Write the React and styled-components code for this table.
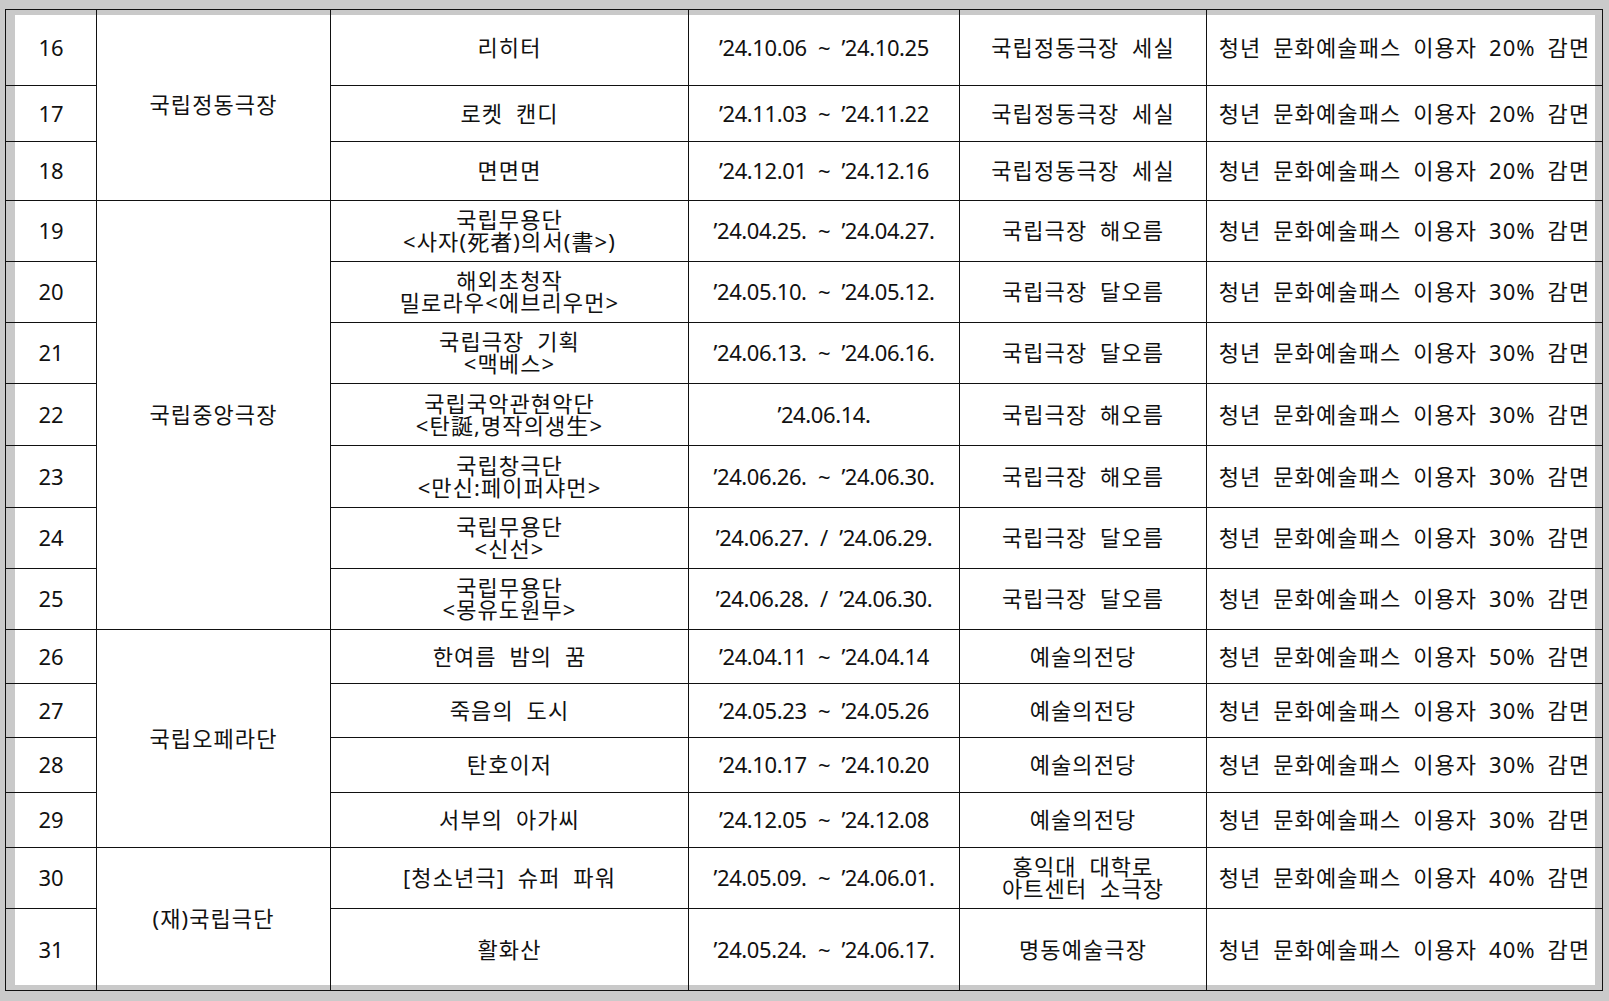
import React from 'react';
import styled, { createGlobalStyle } from 'styled-components';

const GlobalStyle = createGlobalStyle`
  html, body {
    margin: 0;
    padding: 0;
    background: #cacaca;
  }
  body {
    font-family: "Noto Sans", "Noto Sans CJK KR", sans-serif;
    color: #111;
  }
`;

const Page = styled.div`
  width: 1609px;
  height: 1001px;
  padding: 9px 0 0 5px;
  box-sizing: border-box;
  overflow: hidden;
`;

const Table = styled.table`
  table-layout: fixed;
  border-collapse: collapse;
  width: 1597px;
  background: #fff;
  border: 1.5px solid #111;
`;

const Col = styled.col`
  width: ${p => p.$w}px;
`;

const BAND = '#c9c9c9';

const Td = styled.td`
  border: 1px solid #111;
  padding: 0 0 2px;
  text-align: center;
  vertical-align: middle;
  font-size: 22px;
  line-height: 22px;
  letter-spacing: ${p => p.$ls ?? 0}px;
  word-spacing: ${p => p.$ws ?? 2}px;
  white-space: nowrap;
  box-shadow: ${p =>
    [
      p.$top && `inset 0 5px 0 ${BAND}`,
      p.$bottom && `inset 0 -5px 0 ${BAND}`,
      p.$left && `inset 9px 0 0 ${BAND}`,
      p.$right && `inset -7px 0 0 ${BAND}`,
    ]
      .filter(Boolean)
      .join(', ') || 'none'};
`;

const Row = styled.tr`
  height: ${p => p.$h}px;
`;

const Q = '\u2019';

const groups = [
  {
    name: '국립정동극장',
    rows: [
      [16, '리히터', `${Q}24.10.06 ~ ${Q}24.10.25`, '국립정동극장 세실', 20, 76],
      [17, '로켓 캔디', `${Q}24.11.03 ~ ${Q}24.11.22`, '국립정동극장 세실', 20, 56],
      [18, '면면면', `${Q}24.12.01 ~ ${Q}24.12.16`, '국립정동극장 세실', 20, 59],
    ],
  },
  {
    name: '국립중앙극장',
    rows: [
      [19, ['국립무용단', '<사자(死者)의서(書>)'], `${Q}24.04.25. ~ ${Q}24.04.27.`, '국립극장 해오름', 30, 61],
      [20, ['해외초청작', '밀로라우<에브리우먼>'], `${Q}24.05.10. ~ ${Q}24.05.12.`, '국립극장 달오름', 30, 61],
      [21, ['국립극장 기획', '<맥베스>'], `${Q}24.06.13. ~ ${Q}24.06.16.`, '국립극장 달오름', 30, 61],
      [22, ['국립국악관현악단', '<탄誕,명작의생生>'], `${Q}24.06.14.`, '국립극장 해오름', 30, 62],
      [23, ['국립창극단', '<만신:페이퍼샤먼>'], `${Q}24.06.26. ~ ${Q}24.06.30.`, '국립극장 해오름', 30, 62],
      [24, ['국립무용단', '<신선>'], `${Q}24.06.27. / ${Q}24.06.29.`, '국립극장 달오름', 30, 61],
      [25, ['국립무용단', '<몽유도원무>'], `${Q}24.06.28. / ${Q}24.06.30.`, '국립극장 달오름', 30, 61],
    ],
  },
  {
    name: '국립오페라단',
    rows: [
      [26, '한여름 밤의 꿈', `${Q}24.04.11 ~ ${Q}24.04.14`, '예술의전당', 50, 54],
      [27, '죽음의 도시', `${Q}24.05.23 ~ ${Q}24.05.26`, '예술의전당', 30, 54],
      [28, '탄호이저', `${Q}24.10.17 ~ ${Q}24.10.20`, '예술의전당', 30, 55],
      [29, '서부의 아가씨', `${Q}24.12.05 ~ ${Q}24.12.08`, '예술의전당', 30, 55],
    ],
  },
  {
    name: '(재)국립극단',
    rows: [
      [30, '[청소년극] 슈퍼 파워', `${Q}24.05.09. ~ ${Q}24.06.01.`, ['홍익대 대학로', '아트센터 소극장'], 40, 61],
      [31, '활화산', `${Q}24.05.24. ~ ${Q}24.06.17.`, '명동예술극장', 40, 82],
    ],
  },
];

const widths = [91, 234, 358, 271, 247, 396];

function Lines({ value }) {
  if (!Array.isArray(value)) return value;
  return value.map((line, i) => (
    <React.Fragment key={i}>
      {i > 0 && <br />}
      {line}
    </React.Fragment>
  ));
}

export default function App() {
  const lastGroup = groups.length - 1;
  return (
    <Page>
      <GlobalStyle />
      <Table>
        <colgroup>
          {widths.map((w, i) => (
            <Col key={i} $w={w} />
          ))}
        </colgroup>
        <tbody>
          {groups.map((g, gi) =>
            g.rows.map(([no, title, period, venue, rate, h], ri) => {
              const top = gi === 0 && ri === 0;
              const bottom = gi === lastGroup && ri === g.rows.length - 1;
              return (
                <Row key={no} $h={h}>
                  <Td $left $top={top} $bottom={bottom}>{no}</Td>
                  {ri === 0 && (
                    <Td $ls={1.1} rowSpan={g.rows.length} $top={top} $bottom={gi === lastGroup}>
                      {g.name}
                    </Td>
                  )}
                  <Td $ls={1.1} $ws={6} $top={top} $bottom={bottom}>
                    <Lines value={title} />
                  </Td>
                  <Td $ls={-0.4} $ws={6} $top={top} $bottom={bottom}>{period}</Td>
                  <Td $ls={1.1} $ws={6} $top={top} $bottom={bottom}>
                    <Lines value={venue} />
                  </Td>
                  <Td $ls={1.1} $ws={5} $right $top={top} $bottom={bottom}>
                    청년 문화예술패스 이용자 {rate}% 감면
                  </Td>
                </Row>
              );
            })
          )}
        </tbody>
      </Table>
    </Page>
  );
}
